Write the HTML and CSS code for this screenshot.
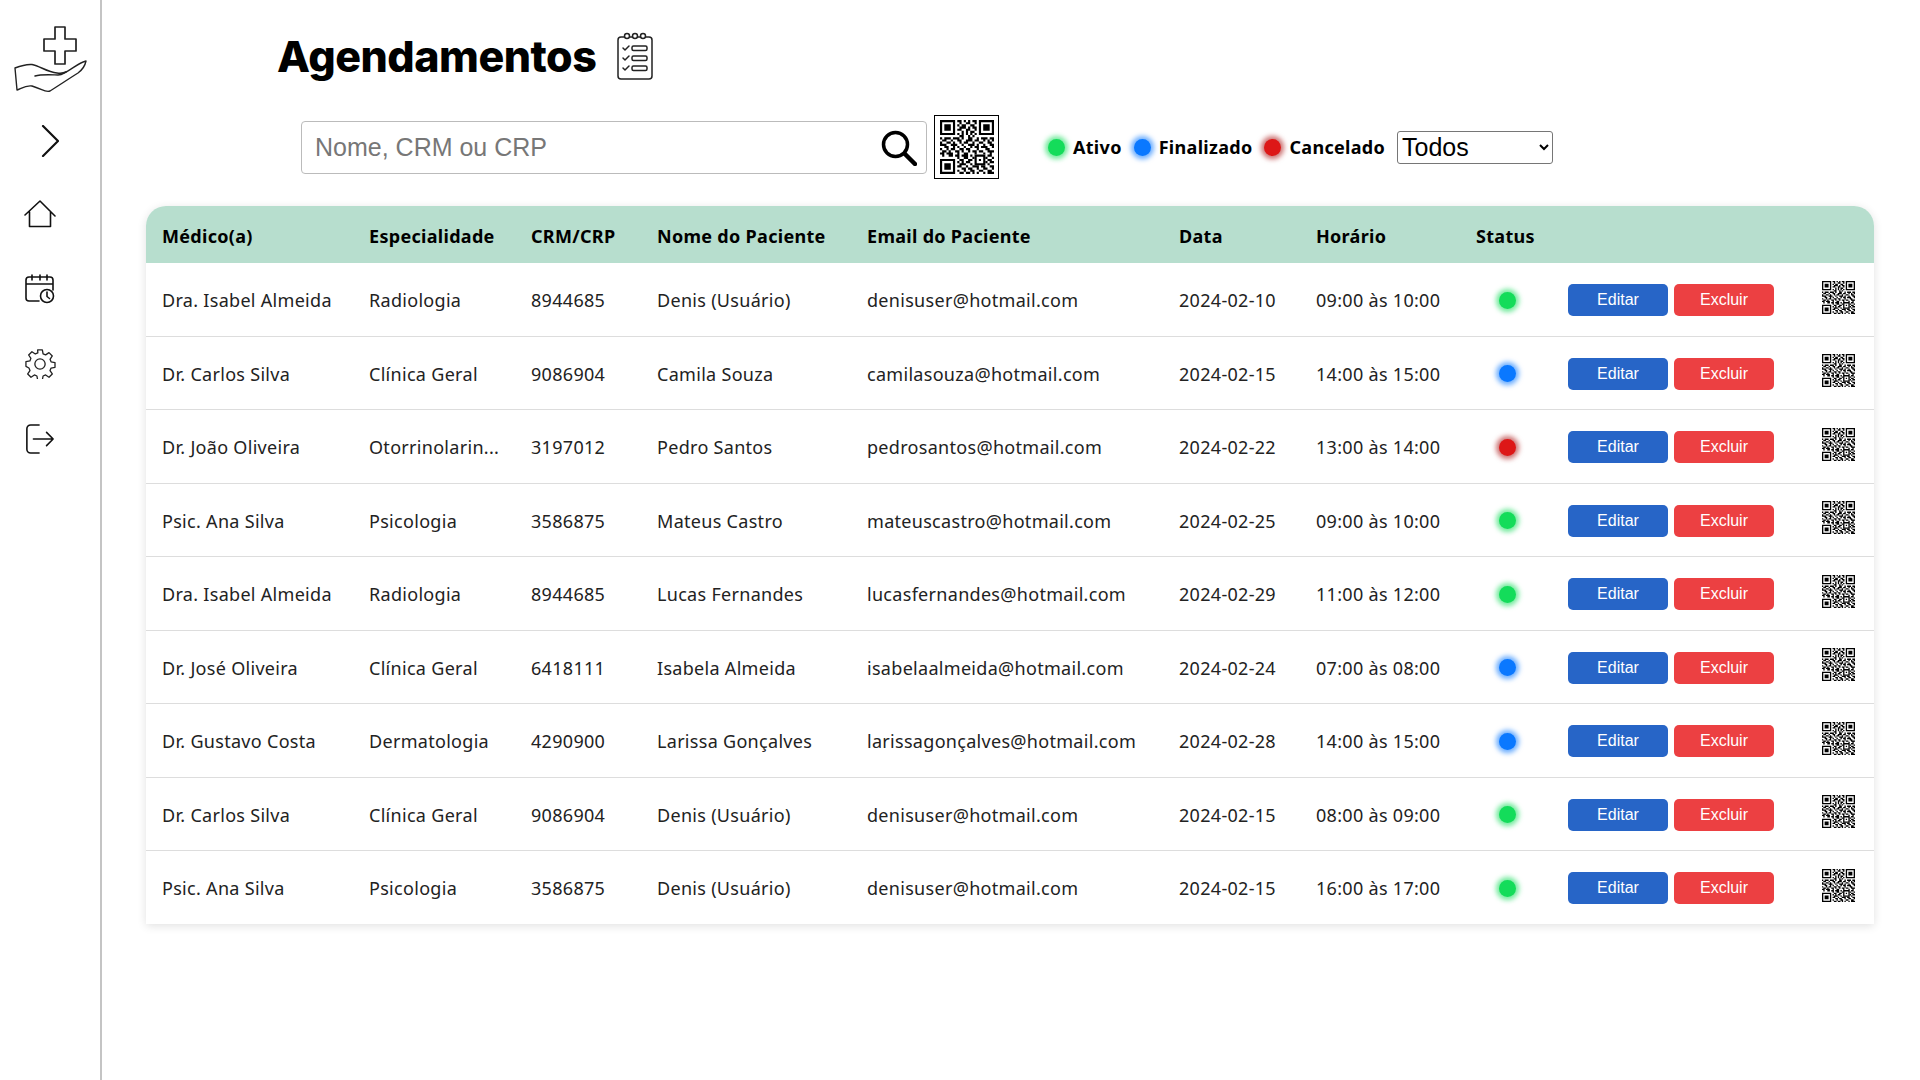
FILE: index.html
```html
<!DOCTYPE html>
<html lang="pt-BR">

<head>
  <meta charset="UTF-8">
  <title>Agendamentos</title>
  <link rel="stylesheet" href="styles.css">
</head>

<body>
  <svg class="defs" width="0" height="0">
    <symbol id="qr" viewBox="0 0 25 25">
      <path fill-rule="evenodd" d="M0 0h7v7h-7zM1 1v5h5v-5zM2 2h3v3h-3zM18 0h7v7h-7zM19 1v5h5v-5zM20 2h3v3h-3zM0 18h7v7h-7zM1 19v5h5v-5zM2 20h3v3h-3zM16 16h5v5h-5zM17 17v3h3v-3zM18 18h1v1h-1z" />
      <path stroke="#000" fill="none" d="M8 .5h2M11 .5h1M13 .5h1M15 .5h2M9 1.5h1M12 1.5h2M16 1.5h1M8 2.5h1M10 2.5h2M14 2.5h2M9 3.5h3M13 3.5h1M15 3.5h2M8 4.5h2M12 4.5h2M16 4.5h1M10 5.5h1M12 5.5h1M14 5.5h2M8 6.5h1M10 6.5h1M12 6.5h1M14 6.5h1M16 6.5h1M9 7.5h2M13 7.5h1M15 7.5h1M0 8.5h1M2 8.5h3M6 8.5h3M10 8.5h1M13 8.5h2M17 8.5h1M19 8.5h3M23 8.5h2M1 9.5h2M5 9.5h1M8 9.5h2M12 9.5h3M16 9.5h2M20 9.5h1M22 9.5h1M24 9.5h1M0 10.5h1M3 10.5h2M6 10.5h1M9 10.5h1M11 10.5h2M15 10.5h1M18 10.5h2M22 10.5h2M0 11.5h3M5 11.5h3M10 11.5h1M13 11.5h3M17 11.5h1M20 11.5h1M23 11.5h2M2 12.5h2M6 12.5h1M8 12.5h1M11 12.5h1M14 12.5h1M16 12.5h2M19 12.5h3M24 12.5h1M0 13.5h1M3 13.5h1M5 13.5h2M9 13.5h2M12 13.5h2M17 13.5h1M21 13.5h2M1 14.5h2M4 14.5h1M7 14.5h2M10 14.5h1M13 14.5h1M15 14.5h2M18 14.5h2M22 14.5h3M0 15.5h2M3 15.5h3M8 15.5h1M11 15.5h2M16 15.5h1M20 15.5h1M23 15.5h1M1 16.5h1M4 16.5h2M7 16.5h2M10 16.5h3M14 16.5h1M22 16.5h2M8 17.5h1M11 17.5h2M15 17.5h1M21 17.5h1M24 17.5h1M9 18.5h2M13 18.5h2M22 18.5h2M8 19.5h1M10 19.5h1M12 19.5h2M21 19.5h1M23 19.5h2M9 20.5h3M14 20.5h1M22 20.5h1M8 21.5h2M12 21.5h1M15 21.5h3M19 21.5h2M23 21.5h2M10 22.5h2M13 22.5h2M17 22.5h1M20 22.5h2M24 22.5h1M8 23.5h1M11 23.5h1M14 23.5h2M18 23.5h2M22 23.5h2M9 24.5h2M12 24.5h2M15 24.5h1M17 24.5h1M20 24.5h1M22 24.5h3" />
    </symbol>
  </svg>

  <div class="page">
    <nav class="sidebar">
      <svg class="logo" viewBox="0 0 74 68" fill="none" stroke="#222" stroke-width="1.4" stroke-linejoin="round" stroke-linecap="round">
        <path d="M41 1h10v12h11v12H51v13H41V25H30V13h11z" stroke-width="1.700" />
        <path d="M1 42C6 40 12 38 18 38.500C26 40 33 46 43 47C47 47.500 50 47 52 46C58 43 66 36 72 35C71 40 68 44 64 47C56 52 44 60 36 65C32 67 28 63 18 60C12 59 8 62 3 64z" />
        <path d="M21 50C28 48 40 49 44 49C48 49 50 47 52 46" />
      </svg>
      <svg class="chevron" viewBox="0 0 18 32" fill="none" stroke="#111" stroke-width="2.200" stroke-linecap="round" stroke-linejoin="round">
        <path d="M2 1l15 15L2 31" />
      </svg>
      <svg class="nav-icon" viewBox="0 0 32 28" fill="none" stroke="#111" stroke-width="1.600" stroke-linecap="round" stroke-linejoin="round">
        <path d="M1 15L16 1l15 15M5.500 12v14.500h21V12" />
      </svg>
      <svg class="nav-icon" viewBox="0 0 30 30" fill="none" stroke="#111" stroke-width="1.600" stroke-linecap="round" stroke-linejoin="round">
        <path d="M14 27H4a3 3 0 0 1-3-3V6a3 3 0 0 1 3-3h21a3 3 0 0 1 3 3v10M1 10h27M7 1v5M15 1v5M22 1v5" />
        <circle cx="22" cy="22" r="6.500" />
        <path d="M22 18v4.500l2.500 2" />
      </svg>
      <svg class="nav-icon" viewBox="0 0 32 32" fill="none" stroke="#222" stroke-width="1.400" stroke-linejoin="round">
        <circle cx="16" cy="16" r="5.500" />
        <path d="M13.500 1h5l.8 4.200 2.700 1.100 3.600-2.400 3.500 3.500-2.400 3.600 1.100 2.700 4.200.8v5l-4.200.8-1.100 2.700 2.400 3.600-3.500 3.500-3.600-2.400-2.700 1.100-.8 4.200h-5l-.8-4.200-2.700-1.100-3.600 2.400-3.500-3.500 2.400-3.600-1.100-2.700L1 18.500v-5l4.200-.8 1.100-2.700-2.400-3.600 3.500-3.500 3.600 2.400 2.700-1.100z" />
      </svg>
      <svg class="nav-icon" viewBox="0 0 30 32" fill="none" stroke="#111" stroke-width="1.700" stroke-linecap="round" stroke-linejoin="round">
        <path d="M14 1H5a4 4 0 0 0-4 4v22a4 4 0 0 0 4 4h9M8 16h21M22 9l7 7-7 7" />
      </svg>
    </nav>

    <main class="content">
      <header class="title-row">
        <h1>Agendamentos</h1>
        <svg class="title-icon" viewBox="0 0 36 48" fill="none" stroke="#222" stroke-width="1.500" stroke-linecap="round" stroke-linejoin="round">
          <rect x="1" y="5" width="34" height="42" rx="3" />
          <circle cx="10" cy="4" r="2.500" fill="#fff" />
          <circle cx="18" cy="4" r="2.500" fill="#fff" />
          <circle cx="26" cy="4" r="2.500" fill="#fff" />
          <path d="M6 16l2 2 4-4M6 26l2 2 4-4M6 36l2 2 4-4" />
          <rect x="15" y="14" width="15" height="4.500" rx="1.500" />
          <rect x="15" y="24" width="15" height="4.500" rx="1.500" />
          <rect x="15" y="34" width="15" height="4.500" rx="1.500" />
        </svg>
      </header>

      <div class="toolbar">
        <div class="search">
          <input type="text" placeholder="Nome, CRM ou CRP">
          <svg class="search-icon" viewBox="0 0 36 36" fill="none" stroke="#000" stroke-linecap="round">
            <circle cx="14.500" cy="14.500" r="12" stroke-width="3.500" />
            <path d="M24 24l10 10" stroke-width="4.500" />
          </svg>
        </div>
        <div class="qr-box"><svg class="qr-big"><use href="#qr" /></svg></div>
        <div class="legend">
          <span class="legend-item"><i class="dot green"></i>Ativo</span>
          <span class="legend-item"><i class="dot blue"></i>Finalizado</span>
          <span class="legend-item"><i class="dot red"></i>Cancelado</span>
        </div>
        <select class="filter">
          <option>Todos</option>
          <option>Ativo</option>
          <option>Finalizado</option>
          <option>Cancelado</option>
        </select>
      </div>

      <table class="agenda">
        <colgroup>
          <col class="c-medico">
          <col class="c-esp">
          <col class="c-crm">
          <col class="c-pac">
          <col class="c-email">
          <col class="c-data">
          <col class="c-hora">
          <col class="c-status">
          <col class="c-btns">
          <col class="c-qr">
        </colgroup>
        <thead>
          <tr>
            <th>Médico(a)</th>
            <th>Especialidade</th>
            <th>CRM/CRP</th>
            <th>Nome do Paciente</th>
            <th>Email do Paciente</th>
            <th>Data</th>
            <th>Horário</th>
            <th>Status</th>
            <th></th>
            <th></th>
          </tr>
        </thead>
        <tbody>
          <tr>
            <td>Dra. Isabel Almeida</td>
            <td>Radiologia</td>
            <td>8944685</td>
            <td>Denis (Usuário)</td>
            <td>denisuser@hotmail.com</td>
            <td>2024-02-10</td>
            <td>09:00 às 10:00</td>
            <td><i class="dot green"></i></td>
            <td><div class="btns"><button class="btn edit">Editar</button><button class="btn del">Excluir</button></div></td>
            <td><svg class="qr-small"><use href="#qr" /></svg></td>
          </tr>
          <tr>
            <td>Dr. Carlos Silva</td>
            <td>Clínica Geral</td>
            <td>9086904</td>
            <td>Camila Souza</td>
            <td>camilasouza@hotmail.com</td>
            <td>2024-02-15</td>
            <td>14:00 às 15:00</td>
            <td><i class="dot blue"></i></td>
            <td><div class="btns"><button class="btn edit">Editar</button><button class="btn del">Excluir</button></div></td>
            <td><svg class="qr-small"><use href="#qr" /></svg></td>
          </tr>
          <tr>
            <td>Dr. João Oliveira</td>
            <td>Otorrinolarin...</td>
            <td>3197012</td>
            <td>Pedro Santos</td>
            <td>pedrosantos@hotmail.com</td>
            <td>2024-02-22</td>
            <td>13:00 às 14:00</td>
            <td><i class="dot red"></i></td>
            <td><div class="btns"><button class="btn edit">Editar</button><button class="btn del">Excluir</button></div></td>
            <td><svg class="qr-small"><use href="#qr" /></svg></td>
          </tr>
          <tr>
            <td>Psic. Ana Silva</td>
            <td>Psicologia</td>
            <td>3586875</td>
            <td>Mateus Castro</td>
            <td>mateuscastro@hotmail.com</td>
            <td>2024-02-25</td>
            <td>09:00 às 10:00</td>
            <td><i class="dot green"></i></td>
            <td><div class="btns"><button class="btn edit">Editar</button><button class="btn del">Excluir</button></div></td>
            <td><svg class="qr-small"><use href="#qr" /></svg></td>
          </tr>
          <tr>
            <td>Dra. Isabel Almeida</td>
            <td>Radiologia</td>
            <td>8944685</td>
            <td>Lucas Fernandes</td>
            <td>lucasfernandes@hotmail.com</td>
            <td>2024-02-29</td>
            <td>11:00 às 12:00</td>
            <td><i class="dot green"></i></td>
            <td><div class="btns"><button class="btn edit">Editar</button><button class="btn del">Excluir</button></div></td>
            <td><svg class="qr-small"><use href="#qr" /></svg></td>
          </tr>
          <tr>
            <td>Dr. José Oliveira</td>
            <td>Clínica Geral</td>
            <td>6418111</td>
            <td>Isabela Almeida</td>
            <td>isabelaalmeida@hotmail.com</td>
            <td>2024-02-24</td>
            <td>07:00 às 08:00</td>
            <td><i class="dot blue"></i></td>
            <td><div class="btns"><button class="btn edit">Editar</button><button class="btn del">Excluir</button></div></td>
            <td><svg class="qr-small"><use href="#qr" /></svg></td>
          </tr>
          <tr>
            <td>Dr. Gustavo Costa</td>
            <td>Dermatologia</td>
            <td>4290900</td>
            <td>Larissa Gonçalves</td>
            <td>larissagonçalves@hotmail.com</td>
            <td>2024-02-28</td>
            <td>14:00 às 15:00</td>
            <td><i class="dot blue"></i></td>
            <td><div class="btns"><button class="btn edit">Editar</button><button class="btn del">Excluir</button></div></td>
            <td><svg class="qr-small"><use href="#qr" /></svg></td>
          </tr>
          <tr>
            <td>Dr. Carlos Silva</td>
            <td>Clínica Geral</td>
            <td>9086904</td>
            <td>Denis (Usuário)</td>
            <td>denisuser@hotmail.com</td>
            <td>2024-02-15</td>
            <td>08:00 às 09:00</td>
            <td><i class="dot green"></i></td>
            <td><div class="btns"><button class="btn edit">Editar</button><button class="btn del">Excluir</button></div></td>
            <td><svg class="qr-small"><use href="#qr" /></svg></td>
          </tr>
          <tr>
            <td>Psic. Ana Silva</td>
            <td>Psicologia</td>
            <td>3586875</td>
            <td>Denis (Usuário)</td>
            <td>denisuser@hotmail.com</td>
            <td>2024-02-15</td>
            <td>16:00 às 17:00</td>
            <td><i class="dot green"></i></td>
            <td><div class="btns"><button class="btn edit">Editar</button><button class="btn del">Excluir</button></div></td>
            <td><svg class="qr-small"><use href="#qr" /></svg></td>
          </tr>
        </tbody>
      </table>
    </main>
  </div>
</body>

</html>
```

FILE: styles.css
```css
body,
html {
  width: 100%;
  height: 100%;
  padding: 0;
  margin: 0;
  background: #fff;
  overflow: hidden;
}

body {
  font-family: "Noto Sans", sans-serif;
  color: #000;
}

.defs {
  display: block;
  height: 0;
}

.page {
  display: flex;
  height: 100%;
}

.sidebar {
  width: 100px;
  flex: none;
  border-right: 2px solid #c4c4c4;
  display: flex;
  flex-direction: column;
}

.logo {
  width: 74px;
  height: 68px;
  margin: 26px 0 0 14px;
}

.chevron {
  width: 18px;
  height: 32px;
  margin: 31px 0 0 41px;
}

.nav-icon {
  width: 32px;
  height: 30px;
  margin: 45px 0 0 24px;
}

.chevron + .nav-icon {
  margin-top: 42px;
}

.content {
  flex: 1;
  padding: 0 46px 0 44px;
  min-width: 0;
}

.title-row {
  display: flex;
  align-items: center;
  gap: 21px;
  height: 115px;
  box-sizing: border-box;
  padding: 0 0 3px 131px;
}

h1 {
  margin: 0;
  font-family: Inter, sans-serif;
  font-size: 43px;
  font-weight: 800;
  letter-spacing: -0.5px;
}

.title-icon {
  width: 36px;
  height: 48px;
}

.toolbar {
  display: flex;
  align-items: center;
  height: 64px;
  padding-left: 155px;
}

.search {
  position: relative;
  width: 626px;
  height: 53px;
}

.search input {
  width: 100%;
  height: 100%;
  box-sizing: border-box;
  border: 1px solid #bbb;
  border-radius: 4px;
  padding: 0 12px 0 13px;
  font-family: "Liberation Sans", sans-serif;
  font-size: 25px;
  outline: none;
}

.search input::placeholder {
  color: #777;
}

.search-icon {
  position: absolute;
  top: 9px;
  right: 10px;
  width: 36px;
  height: 36px;
}

.qr-box {
  width: 65px;
  height: 64px;
  box-sizing: border-box;
  border: 1px solid #000;
  margin-left: 7px;
  display: flex;
  align-items: center;
  justify-content: center;
}

.qr-big {
  width: 54px;
  height: 54px;
}

.legend {
  display: flex;
  align-items: center;
  margin-left: 49px;
  gap: 12px;
  font-weight: 700;
  font-size: 18px;
  letter-spacing: 0.3px;
}

.legend-item {
  display: flex;
  align-items: center;
  gap: 8px;
}

.dot {
  display: inline-block;
  width: 17px;
  height: 17px;
  border-radius: 50%;
}

.green {
  background: #14dc5a;
  box-shadow: 0 0 5px 3px rgba(20, 220, 90, 0.6);
}

.blue {
  background: #0a78ff;
  box-shadow: 0 0 5px 3px rgba(10, 120, 255, 0.6);
}

.red {
  background: #dd1717;
  box-shadow: 0 0 5px 3px rgba(170, 20, 20, 0.6);
}

.filter {
  width: 156px;
  height: 33px;
  margin-left: 12px;
  font-family: "Liberation Sans", sans-serif;
  font-size: 25px;
  background: #fff;
  border: 1px solid #767676;
  border-radius: 3px;
}

.agenda {
  width: 1728px;
  margin-top: 27px;
  table-layout: fixed;
  border-collapse: separate;
  border-spacing: 0;
  border-radius: 20px 20px 0 0;
  box-shadow: 0 2px 10px rgba(0, 0, 0, 0.12);
  font-size: 18px;
  letter-spacing: 0.3px;
}

.c-medico { width: 207px; }
.c-esp { width: 162px; }
.c-crm { width: 126px; }
.c-pac { width: 210px; }
.c-email { width: 312px; }
.c-data { width: 137px; }
.c-hora { width: 160px; }
.c-status { width: 92px; }
.c-btns { width: 238px; }
.c-qr { width: 84px; }

.agenda th {
  height: 57px;
  padding: 3px 0 0 16px;
  box-sizing: border-box;
  background: #b7dece;
  text-align: left;
  font-weight: 700;
}

.agenda th:first-child {
  border-top-left-radius: 20px;
}

.agenda th:last-child {
  border-top-right-radius: 20px;
}

.agenda td {
  height: 73.500px;
  box-sizing: border-box;
  padding: 2px 0 0 16px;
  border-bottom: 1px solid #ddd;
  color: #222;
  white-space: nowrap;
}

.agenda tr:last-child td {
  height: 72.500px;
  border-bottom: 0;
}

.agenda td .dot {
  display: block;
  margin-left: 23px;
}

.btns {
  display: flex;
  gap: 6px;
}

.btn {
  width: 100px;
  height: 32px;
  padding: 0;
  border: 0;
  border-radius: 5px;
  color: #fff;
  font-family: "Liberation Sans", sans-serif;
  font-size: 16px;
}

.edit {
  background: #2765c7;
}

.del {
  background: #ec4042;
}

.qr-small {
  display: block;
  width: 33px;
  height: 33px;
  margin: -6px 0 0 16px;
}
```
